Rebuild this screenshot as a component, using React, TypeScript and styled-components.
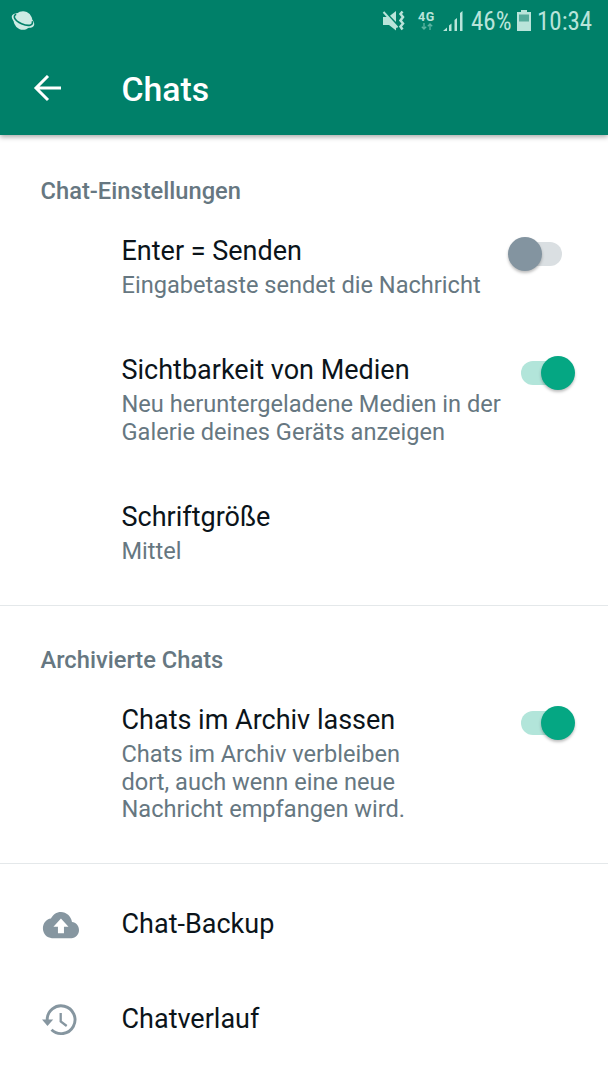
import React from 'react';
import styled, { createGlobalStyle } from 'styled-components';

const GlobalStyle = createGlobalStyle`
  * { box-sizing: border-box; }
  body { margin: 0; background: #fff; font-family: Roboto, sans-serif; }
`;

const Screen = styled.div`
  width: 608px;
  height: 1080px;
  overflow: hidden;
  background: #fff;
  color: #0b141a;
`;

const Header = styled.header`
  height: 135px;
  background: #008069;
  box-shadow: 0 2px 5px rgba(0, 0, 0, 0.34);
`;

const StatusBar = styled.div`
  display: flex;
  align-items: center;
  justify-content: space-between;
  height: 41px;
  padding: 0 14px 0 10px;
  color: #b9e4da;
`;

const StatusGroup = styled.div`
  display: flex;
  align-items: center;
`;

const StatusText = styled.span<{ $width: number; $gap: number }>`
  width: ${(p) => p.$width}px;
  margin-left: ${(p) => p.$gap}px;
  font-family: 'Roboto Condensed', Roboto, sans-serif;
  font-size: 25px;
  line-height: 30px;
  white-space: nowrap;
  padding-top: 3px;
`;

const Network = styled.div`
  display: flex;
  flex-direction: column;
  align-items: center;
  width: 17px;
  margin: 0 8px 0 13px;
  font-size: 12.5px;
  font-weight: 700;
  line-height: 12px;
  letter-spacing: 0.6px;
`;

const Toolbar = styled.div`
  display: flex;
  align-items: center;
  height: 94px;
  padding-left: 33px;
  color: #fff;
`;

const Title = styled.h1`
  margin: 3px 0 0 59.5px;
  font-size: 33.8px;
  line-height: 40px;
  font-weight: 500;
`;

const Section = styled.section<{ $height: number; $top: number }>`
  height: ${(p) => p.$height}px;
  padding: ${(p) => p.$top}px 33px 0 40.5px;
  border-bottom: 1px solid #e4e8ea;
`;

const SectionTitle = styled.h2`
  margin: 0 0 29.5px;
  font-size: 23.7px;
  line-height: 28px;
  font-weight: 500;
  color: #667781;
`;

const Setting = styled.div`
  display: flex;
  justify-content: space-between;
  padding: 0 0 54.8px 81px;
`;

const Label = styled.div<{ $width?: number }>`
  width: ${(p) => (p.$width ? `${p.$width}px` : 'auto')};
  flex: none;
`;

const Name = styled.div`
  font-size: 27px;
  line-height: 32px;
  white-space: nowrap;
`;

const Description = styled.div`
  margin-top: 5.2px;
  font-size: 23.6px;
  line-height: 27.6px;
  color: #667781;
`;

const Track = styled.div<{ $on?: boolean }>`
  display: flex;
  align-items: center;
  justify-content: ${(p) => (p.$on ? 'flex-end' : 'flex-start')};
  width: 40px;
  height: 24px;
  margin: ${(p) => (p.$on ? '7px 14px 0 0' : '7px 13px 0 0')};
  border-radius: 12px;
  background: ${(p) => (p.$on ? '#b2e5da' : '#dadfe2')};
`;

const Thumb = styled.div<{ $on?: boolean }>`
  flex: none;
  width: 34px;
  height: 34px;
  margin: ${(p) => (p.$on ? '0 -14px 0 0' : '0 0 0 -14px')};
  border-radius: 50%;
  background: ${(p) => (p.$on ? '#05a783' : '#8394a0')};
  box-shadow: 0 2px 3px rgba(0, 0, 0, 0.26);
`;

const LinkList = styled.nav`
  padding: 13px 0 0 42px;
`;

const LinkRow = styled.div`
  display: flex;
  align-items: center;
  height: 94.5px;
`;

const LinkIcon = styled.span`
  display: flex;
  width: 79.5px;
  color: #8696a0;
  padding-top: 2px;
`;

function Switch({ on }: { on?: boolean }) {
  return (
    <Track $on={on} role="switch" aria-checked={!!on}>
      <Thumb $on={on} />
    </Track>
  );
}

function PlanetIcon() {
  return (
    <svg width="26" height="24" viewBox="0 0 26 24">
      <g transform="rotate(24 13 11.500)">
        <ellipse cx="13" cy="11.500" rx="12" ry="6" fill="#cdebe4" />
        <circle cx="13" cy="11.500" r="9.300" fill="#cdebe4" />
        <path d="M4.200 8.500C1.500 11.500 5 15 13 15C21 15 24.500 11.500 21.800 8.500" fill="none" stroke="#008069" strokeWidth="1.600" />
      </g>
    </svg>
  );
}

function MuteIcon() {
  return (
    <svg width="23" height="22" viewBox="0 0 23 22" fill="currentColor">
      <path d="M1 7h4.500L14 16v4.500L7 15H1z" />
      <path d="M8 5.700 14 1v11z" />
      <path d="M1.500 2 15.500 17.500" stroke="currentColor" strokeWidth="2" fill="none" />
      <path d="M20.500 1.500 18.500 4l2.500 3-2.500 3.500 2.500 3-2.500 3 2 3" stroke="currentColor" strokeWidth="2.500" fill="none" />
    </svg>
  );
}

function DataArrows() {
  return (
    <svg width="12" height="7" viewBox="0 0 12 7" fill="none" stroke="#5db5a3" strokeWidth="1.300">
      <path d="M3 0v6M.8 3.700 3 6l2.200-2.300M9 7V1M6.800 3.300 9 1l2.200 2.300" />
    </svg>
  );
}

function SignalIcon() {
  return (
    <svg width="22" height="20" viewBox="0 0 22 20" fill="currentColor">
      <path d="M0 20 4 16.500V20zM6 14.500 8.500 12.500v7.500H6zM11.500 9 14 7v13h-2.500zM17 2l2.500-2v20H17z" />
    </svg>
  );
}

function BatteryIcon() {
  return (
    <svg width="14" height="21" viewBox="0 0 14 21">
      <path d="M4 0h6v2h4v19H0V2h4z" fill="#b9e4da" />
      <path d="M2 4.500h10v7H2z" fill="#55ab9b" />
    </svg>
  );
}

export default function App() {
  return (
    <Screen>
      <GlobalStyle />
      <Header>
        <StatusBar>
          <PlanetIcon />
          <StatusGroup>
            <MuteIcon />
            <Network>
              4G
              <DataArrows />
            </Network>
            <SignalIcon />
            <StatusText $width={46} $gap={6}>46%</StatusText>
            <BatteryIcon />
            <StatusText $width={57} $gap={6}>10:34</StatusText>
          </StatusGroup>
        </StatusBar>
        <Toolbar>
          <svg width="29" height="27" viewBox="0 0 29 27" fill="none" stroke="currentColor" strokeWidth="3">
            <path d="M28 13H3M15 1 3 13l12 12" />
          </svg>
          <Title>Chats</Title>
        </Toolbar>
      </Header>

      <Section $height={471} $top={42}>
        <SectionTitle>Chat-Einstellungen</SectionTitle>
        <Setting>
          <Label $width={385}>
            <Name>Enter = Senden</Name>
            <Description>Eingabetaste sendet die Nachricht</Description>
          </Label>
          <Switch />
        </Setting>
        <Setting>
          <Label $width={385}>
            <Name>Sichtbarkeit von Medien</Name>
            <Description>Neu heruntergeladene Medien in der Galerie deines Geräts anzeigen</Description>
          </Label>
          <Switch on />
        </Setting>
        <Setting>
          <Label>
            <Name>Schriftgröße</Name>
            <Description>Mittel</Description>
          </Label>
        </Setting>
      </Section>

      <Section $height={258} $top={40.35}>
        <SectionTitle>Archivierte Chats</SectionTitle>
        <Setting>
          <Label $width={300}>
            <Name>Chats im Archiv lassen</Name>
            <Description>Chats im Archiv verbleiben dort, auch wenn eine neue Nachricht empfangen wird.</Description>
          </Label>
          <Switch on />
        </Setting>
      </Section>

      <LinkList>
        <LinkRow>
          <LinkIcon>
            <svg width="37" height="27" viewBox="-0.6 4 24.600 16.500" preserveAspectRatio="none" fill="currentColor">
              <path d="M19.350 10.040C18.670 6.590 15.640 4 12 4 9.110 4 6.600 5.640 5.350 8.040 2.340 8.360 0 10.910 0 14c0 3.310 2.690 6 6 6h13c2.760 0 5-2.240 5-5 0-2.640-2.050-4.780-4.650-4.960zM14 13v4h-4v-4H7l5-5 5 5h-3z" />
            </svg>
          </LinkIcon>
          <Name>Chat-Backup</Name>
        </LinkRow>
        <LinkRow>
          <LinkIcon>
            <svg width="36" height="32" viewBox="0 0 36 32" fill="none" stroke="currentColor" strokeWidth="2.900">
              <path d="M5.200 17V16A13.900 13.900 0 1 1 9.500 25.800" />
              <path d="M0 15.500h11.200L5.500 22z" fill="currentColor" stroke="none" />
              <path d="M18.700 9v8.500l6 4.500" strokeWidth="2.300" />
            </svg>
          </LinkIcon>
          <Name>Chatverlauf</Name>
        </LinkRow>
      </LinkList>
    </Screen>
  );
}
